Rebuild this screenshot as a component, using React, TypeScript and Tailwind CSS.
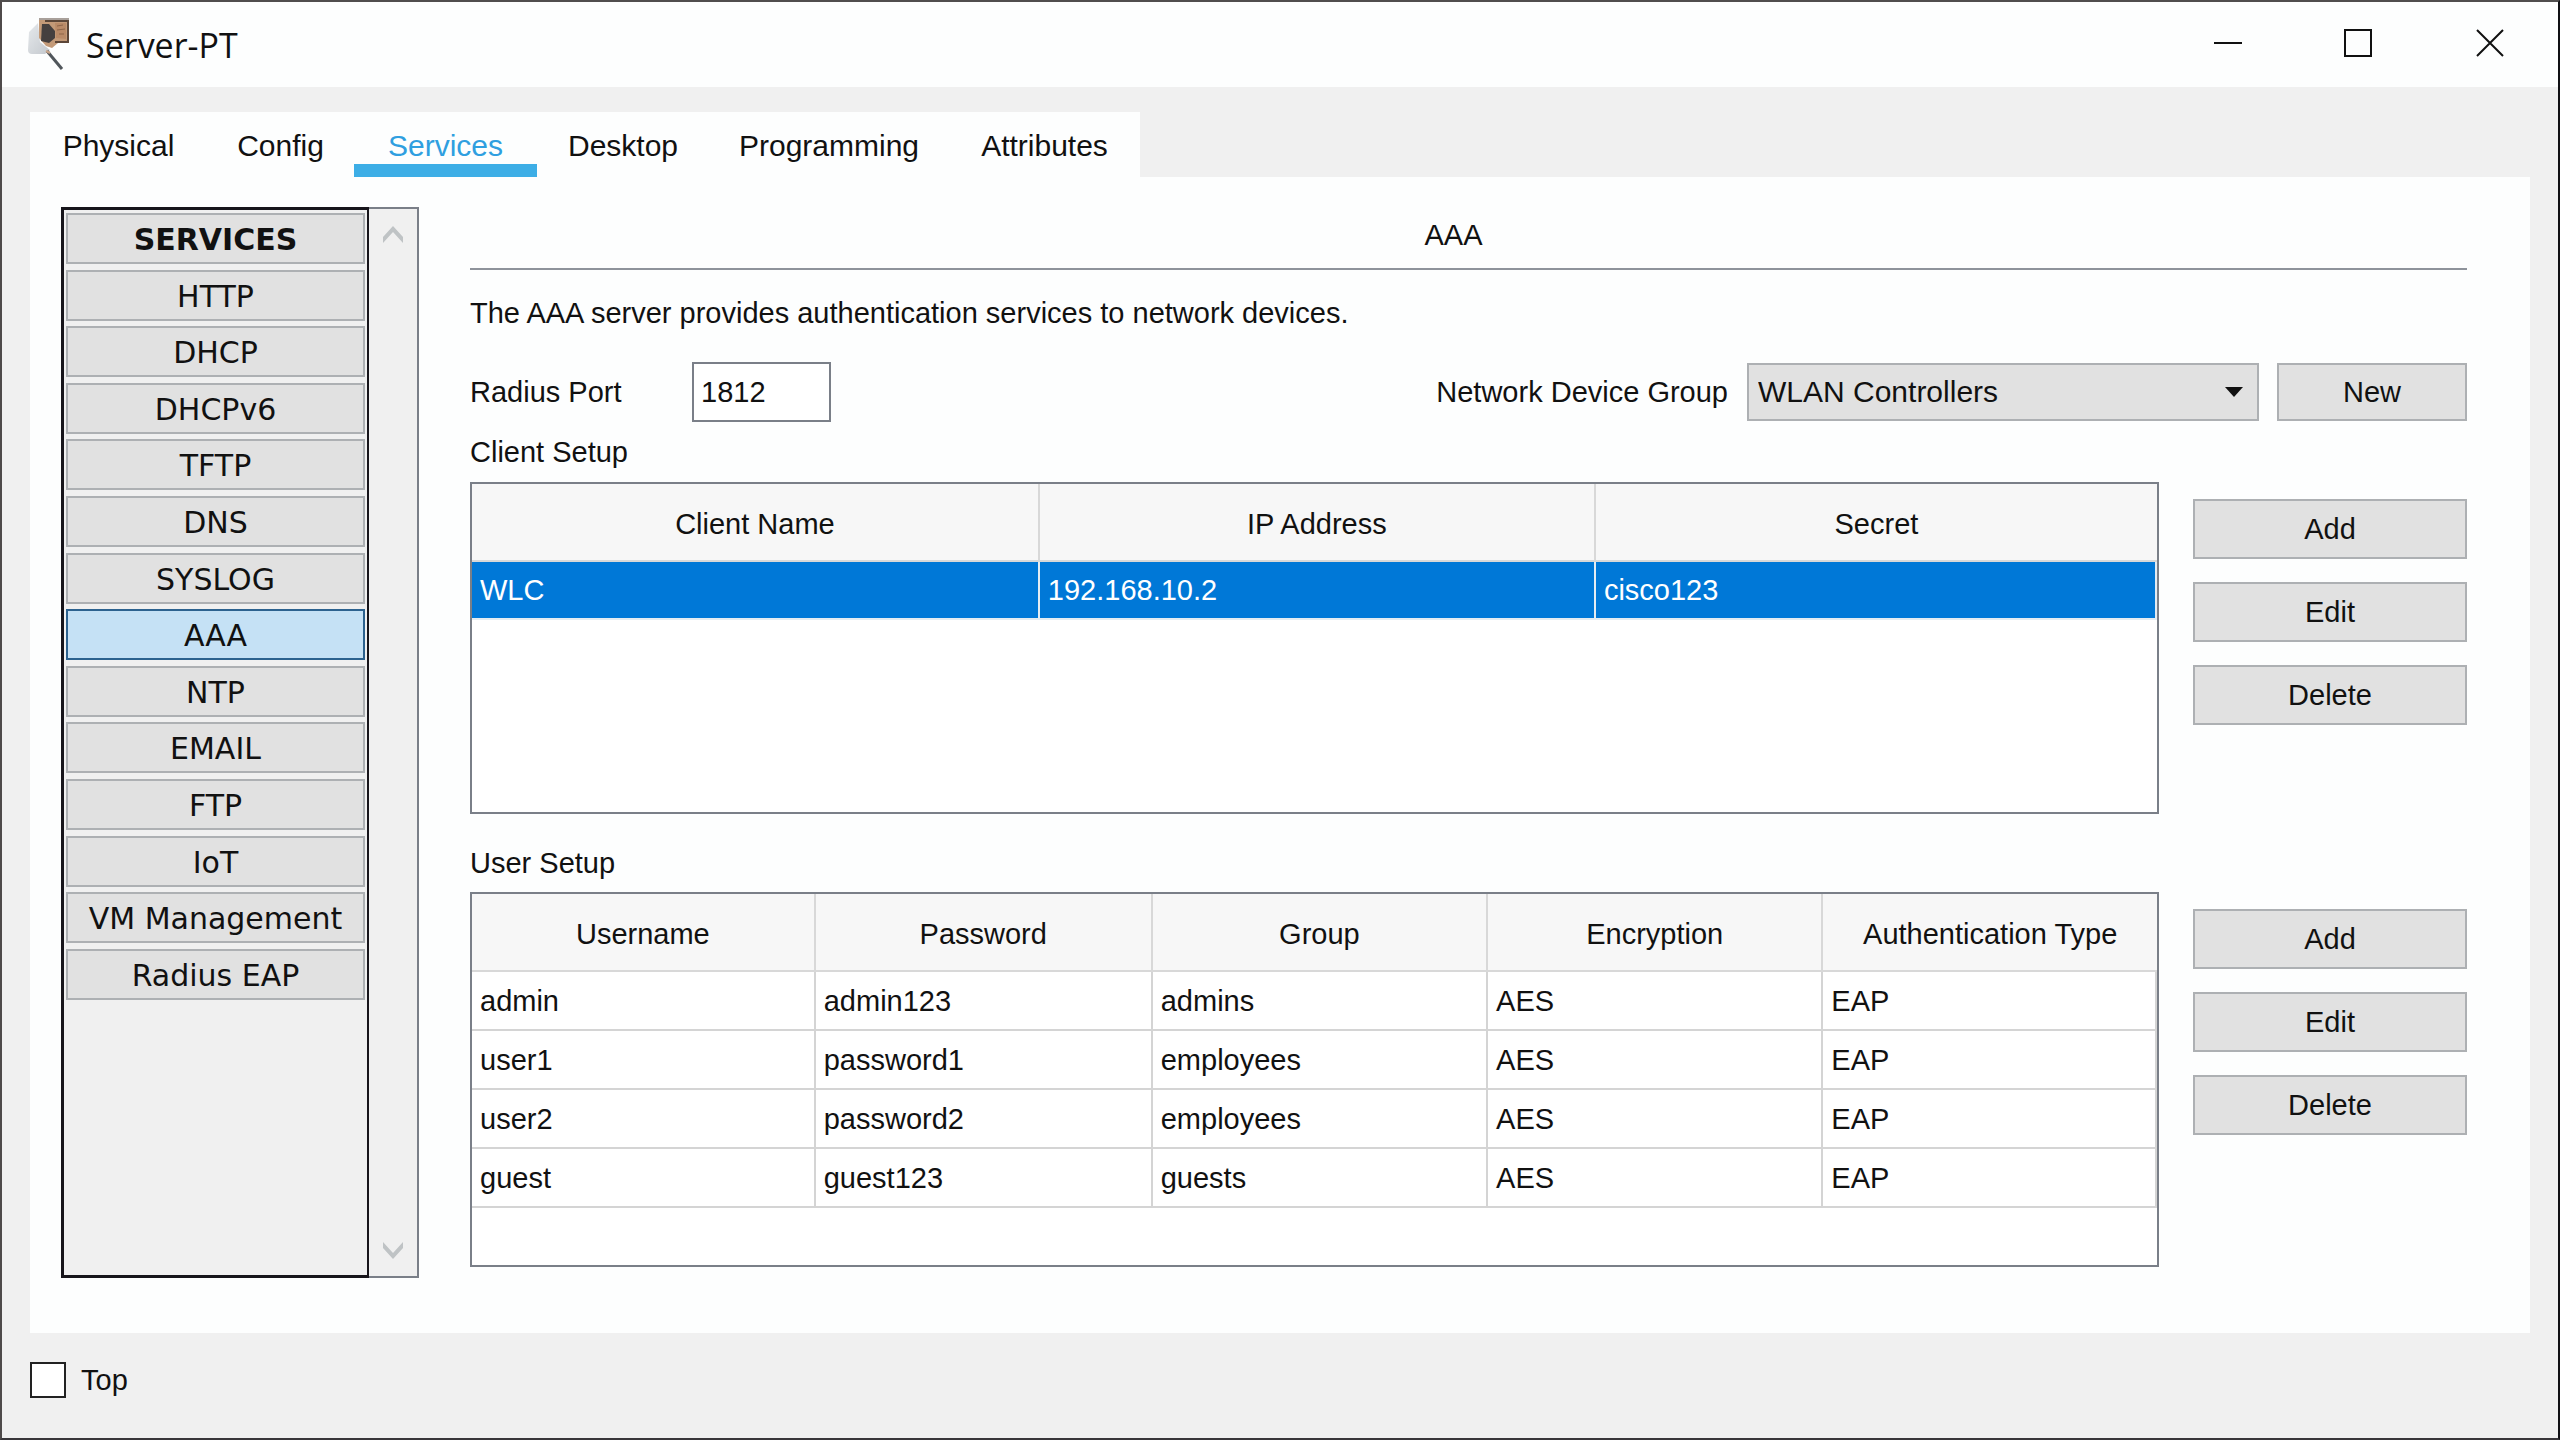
import { useState } from "react";

const TABS = [
  { name: "Physical", width: "w-[177px]" },
  { name: "Config", width: "w-[147px]" },
  { name: "Services", width: "w-[183px]" },
  { name: "Desktop", width: "w-[172px]" },
  { name: "Programming", width: "w-[240px]" },
  { name: "Attributes", width: "w-[191px]" },
];

const SERVICES = [
  "SERVICES",
  "HTTP",
  "DHCP",
  "DHCPv6",
  "TFTP",
  "DNS",
  "SYSLOG",
  "AAA",
  "NTP",
  "EMAIL",
  "FTP",
  "IoT",
  "VM Management",
  "Radius EAP",
];

const USERS = [
  ["admin", "admin123", "admins", "AES", "EAP"],
  ["user1", "password1", "employees", "AES", "EAP"],
  ["user2", "password2", "employees", "AES", "EAP"],
  ["guest", "guest123", "guests", "AES", "EAP"],
];

function AppIcon() {
  return (
    <svg viewBox="0 0 42 53" className="h-[53px] w-[42px]" aria-hidden="true">
      <defs>
        <linearGradient id="cover" x1="0" y1="0" x2="1" y2="1">
          <stop offset="0" stopColor="#e6e9ec" />
          <stop offset="1" stopColor="#c3c8cd" />
        </linearGradient>
      </defs>
      <path d="M10 5 L1 14 L0 32 Q0 36 4 36 L17 36 L22 32 L12 24 Z" fill="url(#cover)" />
      <path d="M11 0 H41 V24 L30 25 L24 30 L18 28 L11 20 Z" fill="#c39a78" />
      <path d="M11 0 H41 V2 H11 Z" fill="#a8a09a" />
      <path d="M17 3 H40 V24 H27" fill="none" stroke="#5b4638" strokeWidth="2" />
      <path d="M27 5 L38 5 L38 21 L28 20 Z" fill="#b98a67" />
      <path d="M29 8 L35 7 M29 12 L37 11 M31 16 L36 16" stroke="#8d6549" strokeWidth="1" />
      <path d="M14 6 L21 6 L27 13 L27 20 L21 25 L13 23 Z" fill="#45403f" />
      <path d="M19 33 L34 51" stroke="#50565b" strokeWidth="3" />
      <path d="M18 33 L22 35" stroke="#c9a58a" strokeWidth="2" />
    </svg>
  );
}

function PushButton({ children, className = "" }: { children: string; className?: string }) {
  return (
    <button type="button" className={`border-2 border-[#adb0b3] bg-[#e1e1e1] text-center ${className}`}>
      {children}
    </button>
  );
}

function SideActions() {
  return (
    <div className="flex w-[274px] shrink-0 flex-col gap-[23px] pt-[17px]">
      <PushButton className="h-[60px]">Add</PushButton>
      <PushButton className="h-[60px]">Edit</PushButton>
      <PushButton className="h-[60px]">Delete</PushButton>
    </div>
  );
}

function HeadRow({ labels }: { labels: string[] }) {
  return (
    <thead>
      <tr className="h-[78px] bg-[#f7f7f7]">
        {labels.map((label) => (
          <th
            key={label}
            scope="col"
            className="border-r-2 border-b-2 border-[#d8d8d8] pt-1 font-normal last:border-r-0"
          >
            {label}
          </th>
        ))}
      </tr>
    </thead>
  );
}

export default function App() {
  const [tab, setTab] = useState("Services");
  const [service, setService] = useState("AAA");

  return (
    <div className="flex min-h-screen flex-col border-2 border-t-[#504e4e] border-r-[#101014] border-b-[#38363a] border-l-[#4e4a4a] bg-[#f0f0f0] font-['Liberation_Sans',Arial,sans-serif] text-[29px] leading-10 text-[#111]">
      <header className="flex h-[85px] items-center bg-[#fdfefe] pl-[26px]">
        <AppIcon />
        <h1 className="ml-4 font-['Open_Sans',sans-serif] text-[34px]">Server-PT</h1>
        <div className="ml-auto flex self-stretch pr-px pb-[3px]">
          <button type="button" aria-label="Minimize" className="flex w-[130px] items-center justify-center">
            <svg viewBox="0 0 28 28" className="size-7" aria-hidden="true">
              <path d="M0 14 H28" stroke="#111" strokeWidth="2" />
            </svg>
          </button>
          <button type="button" aria-label="Maximize" className="flex w-[130px] items-center justify-center">
            <svg viewBox="0 0 28 28" className="size-7" aria-hidden="true">
              <path d="M1 1 H27 V27 H1 Z" fill="none" stroke="#111" strokeWidth="2" />
            </svg>
          </button>
          <button type="button" aria-label="Close" className="flex w-[134px] items-center justify-center">
            <svg viewBox="0 0 28 28" className="size-7" aria-hidden="true">
              <path d="M1 1 L27 27 M27 1 L1 27" stroke="#111" strokeWidth="2" />
            </svg>
          </button>
        </div>
      </header>

      <div className="flex flex-1 flex-col px-7 pt-[25px]">
        <nav className="flex h-[65px] self-start bg-[#fdfefe] text-[30px] leading-9">
          {TABS.map(({ name, width }) => (
            <button
              key={name}
              type="button"
              onClick={() => setTab(name)}
              className={`${width} border-b-[13px] pt-4 text-center ${
                tab === name ? "border-[#3daee6] text-[#2f9fe0]" : "border-transparent"
              }`}
            >
              {name}
            </button>
          ))}
        </nav>

        <main className="flex flex-1 items-start gap-[51px] bg-[#fdfefe] pt-[30px] pr-[63px] pb-[55px] pl-[31px]">
          <aside className="flex w-[358px] shrink-0 self-stretch bg-[#f0f0f0] font-['DejaVu_Sans',Verdana,sans-serif] text-[30px]">
            <div className="w-[308px] border-[3px] border-r-2 border-[#17151b] p-0.5 pt-[3px]">
              <ul className="flex h-[787px] flex-col justify-between">
                {SERVICES.map((name) => (
                  <li key={name} className="flex">
                    <button
                      type="button"
                      onClick={() => setService(name)}
                      className={`h-[51px] flex-1 border-2 pt-[3px] text-center leading-[44px] ${
                        name === "SERVICES" ? "font-bold" : ""
                      } ${service === name ? "border-[#2c628f] bg-[#c5e1f5]" : "border-[#adb0b3] bg-[#e1e1e1]"}`}
                    >
                      {name}
                    </button>
                  </li>
                ))}
              </ul>
            </div>
            <div className="flex flex-1 flex-col items-center justify-between border-y-2 border-r-2 border-[#7a7f88] py-[17px]">
              <button type="button" aria-label="Scroll up">
                <svg viewBox="0 0 20 17" className="h-[17px] w-5" aria-hidden="true">
                  <path d="M0 11 L10 0 L20 11 V17 L10 6 L0 17 Z" fill="#bfc3c5" />
                </svg>
              </button>
              <button type="button" aria-label="Scroll down">
                <svg viewBox="0 0 20 17" className="h-[17px] w-5" aria-hidden="true">
                  <path d="M0 6 L10 17 L20 6 V0 L10 11 L0 0 Z" fill="#bfc3c5" />
                </svg>
              </button>
            </div>
          </aside>

          <section className="min-w-0 flex-1">
            <h2 className="border-b-2 border-[#8e939b] pr-[30px] pb-[5px] text-center leading-[56px]">AAA</h2>
            <p className="mt-[23px]">The AAA server provides authentication services to network devices.</p>

            <div className="mt-[29px] flex h-[60px] items-center">
              <label htmlFor="port" className="w-[222px]">
                Radius Port
              </label>
              <input
                id="port"
                type="text"
                defaultValue="1812"
                className="h-[60px] w-[139px] border-2 border-[#7a7f88] bg-white px-[7px]"
              />
              <label htmlFor="group" className="mr-[19px] ml-auto">
                Network Device Group
              </label>
              <div className="relative w-[512px]">
                <select
                  id="group"
                  defaultValue="WLAN Controllers"
                  className="h-[58px] w-full appearance-none border-2 border-[#adb0b3] bg-[#e1e1e1] px-[9px] text-[30px]"
                >
                  <option>WLAN Controllers</option>
                </select>
                <svg
                  viewBox="0 0 18 10"
                  className="pointer-events-none absolute top-6 right-4 h-[10px] w-[18px]"
                  aria-hidden="true"
                >
                  <path d="M0 0 H18 L9 10 Z" fill="#111" />
                </svg>
              </div>
              <PushButton className="ml-[18px] h-[58px] w-[190px]">New</PushButton>
            </div>

            <h3 className="mt-[10px] mb-[10px]">Client Setup</h3>
            <div className="flex gap-[34px]">
              <div className="h-[332px] flex-1 border-2 border-[#7a7f88] bg-white">
                <table className="w-full table-fixed border-separate border-spacing-0">
                  <colgroup>
                    <col className="w-[33.7%]" />
                    <col className="w-[33%]" />
                    <col />
                  </colgroup>
                  <HeadRow labels={["Client Name", "IP Address", "Secret"]} />
                  <tbody>
                    <tr className="h-[58px] bg-[#0078d7] text-white">
                      {["WLC", "192.168.10.2", "cisco123"].map((value) => (
                        <td key={value} className="border-r-2 border-b-2 border-[#e4ecf2] pl-2">
                          {value}
                        </td>
                      ))}
                    </tr>
                  </tbody>
                </table>
              </div>
              <SideActions />
            </div>

            <h3 className="mt-[29px] mb-[9px]">User Setup</h3>
            <div className="flex gap-[34px]">
              <div className="h-[375px] flex-1 border-2 border-[#7a7f88] bg-white">
                <table className="w-full table-fixed border-separate border-spacing-0">
                  <colgroup>
                    <col className="w-[20.4%]" />
                    <col className="w-[20%]" />
                    <col className="w-[19.9%]" />
                    <col className="w-[19.9%]" />
                    <col />
                  </colgroup>
                  <HeadRow labels={["Username", "Password", "Group", "Encryption", "Authentication Type"]} />
                  <tbody>
                    {USERS.map((row) => (
                      <tr key={row[0]} className="h-[59px]">
                        {row.map((value, i) => (
                          <td key={i} className="border-r-2 border-b-2 border-[#d4d4d4] pl-2">
                            {value}
                          </td>
                        ))}
                      </tr>
                    ))}
                  </tbody>
                </table>
              </div>
              <SideActions />
            </div>
          </section>
        </main>
      </div>

      <footer className="flex h-[105px] items-center px-7 pb-[11px]">
        <input
          id="top"
          type="checkbox"
          className="size-9 appearance-none border-2 border-[#222] bg-white checked:bg-[#2f9fe0]"
        />
        <label htmlFor="top" className="ml-[15px]">
          Top
        </label>
      </footer>
    </div>
  );
}
